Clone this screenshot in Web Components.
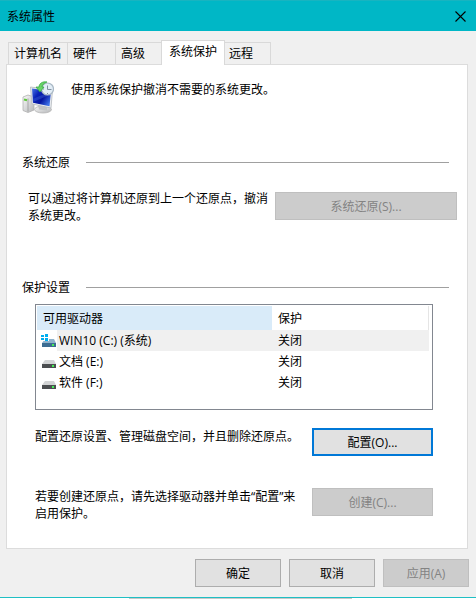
<!DOCTYPE html>
<html lang="zh-CN">
<head>
<meta charset="utf-8">
<meta name="viewport" content="width=device-width, initial-scale=1">
<title>系统属性</title>
<style>
html { height:100%; }
body {
    margin:0; min-height:100%; display:flex; flex-direction:column;
    font:12px/17px "Open Sans", "Noto Sans CJK SC", sans-serif;
    color:#000; background:#fff;
}
</style>
</head>
<body>

<sys-dialog heading="系统属性">
    <sys-tab slot="tabs">计算机名</sys-tab>
    <sys-tab slot="tabs">硬件</sys-tab>
    <sys-tab slot="tabs">高级</sys-tab>
    <sys-tab slot="tabs" selected>系统保护</sys-tab>
    <sys-tab slot="tabs">远程</sys-tab>

    <sys-intro>使用系统保护撤消不需要的系统更改。</sys-intro>

    <sys-group heading="系统还原" class="restore">
        <sys-action wide>
            可以通过将计算机还原到上一个还原点，撤消系统更改。
            <sys-button slot="button" disabled>系统还原(S)...</sys-button>
        </sys-action>
    </sys-group>

    <sys-group heading="保护设置">
        <drive-list></drive-list>
        <sys-action>
            配置还原设置、管理磁盘空间，并且删除还原点。
            <sys-button slot="button" default>配置(O)...</sys-button>
        </sys-action>
        <sys-action>
            若要创建还原点，请先选择驱动器并单击“配置”来启用保护。
            <sys-button slot="button" disabled>创建(C)...</sys-button>
        </sys-action>
    </sys-group>

    <sys-button slot="footer">确定</sys-button>
    <sys-button slot="footer">取消</sys-button>
    <sys-button slot="footer" disabled>应用(A)</sys-button>
</sys-dialog>

<script>
customElements.define('sys-dialog', class extends HTMLElement {
    constructor() {
        super();
        const shadow = this.attachShadow({mode: 'open'});
        shadow.innerHTML = `
        <style>
        :host { display:flex; flex-direction:column; flex:1; background:#f0f0f0; }
        header { display:flex; align-items:center; justify-content:space-between; height:30px; padding-left:7px; background:#00b7c6; border-top:1px solid #18b4c0; }
        h1 { margin:0; font-size:12px; font-weight:normal; }
        .close { width:32px; height:30px; padding:0; border:0; background:none; display:grid; place-items:center; }
        .tabs { display:flex; align-items:flex-end; height:24px; margin:9px 8px 0; }
        main { flex:1; margin:0 8px 0 6px; border:1px solid #dcdcdc; background:#fff; }
        footer { display:flex; justify-content:flex-end; gap:8px; padding:10px 7px; border-bottom:1px solid #1fbfc4; --button-width:86px; }
        .behind { height:1px; background:linear-gradient(90deg, #fff 27%, #c8c8c8 27% 74%, #fff 74%); }
        </style>
        <header>
            <h1></h1>
            <button class=close aria-label="关闭">
                <svg width=11 height=11 viewBox="0 0 11 11"><path d="M.5.5l10 10M10.5.5l-10 10" stroke="#000" stroke-width="1.1"/></svg>
            </button>
        </header>
        <div class=tabs role=tablist><slot name=tabs></slot></div>
        <main><slot></slot></main>
        <footer><slot name=footer></slot></footer>
        <div class=behind></div>`;
        this.titleEl = shadow.querySelector('h1');
    }
    connectedCallback() {
        this.titleEl.textContent = this.getAttribute('heading');
        this.addEventListener('click', e => {
            const tab = e.target.closest('sys-tab');
            if (!tab) return;
            for (const el of this.querySelectorAll('sys-tab')) el.toggleAttribute('selected', el === tab);
        });
    }
});

customElements.define('sys-tab', class extends HTMLElement {
    static observedAttributes = ['selected'];
    constructor() {
        super();
        const shadow = this.attachShadow({mode: 'open', delegatesFocus: true});
        shadow.innerHTML = `
        <style>
        :host { display:block; min-width:48px; }
        button { box-sizing:border-box; width:100%; height:22px; padding:0 5px; border:solid #d9d9d9; border-width:1px 0 0 1px; background:#f0f0f0; color:inherit; font:inherit; text-align:left; white-space:nowrap; }
        :host(:last-of-type) button { border-right-width:1px; }
        :host([selected]) { position:relative; z-index:1; margin:0 -2px -1px; }
        :host([selected]) button { height:25px; padding:0 7px 3px; border-right-width:1px; background:#fff; }
        </style>
        <button role=tab><slot></slot></button>`;
        this.button = shadow.querySelector('button');
    }
    attributeChangedCallback() {
        this.button.setAttribute('aria-selected', this.hasAttribute('selected'));
    }
});

customElements.define('sys-button', class extends HTMLElement {
    static observedAttributes = ['disabled'];
    constructor() {
        super();
        const shadow = this.attachShadow({mode: 'open', delegatesFocus: true});
        shadow.innerHTML = `
        <style>
        :host { display:block; width:var(--button-width, auto); }
        button { box-sizing:border-box; width:100%; height:28px; padding:0; border:1px solid #adadad; background:#e1e1e1; color:#000; font:inherit; }
        button:disabled { border-color:#bfbfbf; background:#ccc; color:#838383; }
        :host([default]) button { border:2px solid #0078d7; }
        </style>
        <button><slot></slot></button>`;
        this.button = shadow.querySelector('button');
    }
    attributeChangedCallback() {
        this.button.disabled = this.hasAttribute('disabled');
    }
});

customElements.define('sys-intro', class extends HTMLElement {
    constructor() {
        super();
        this.attachShadow({mode: 'open'}).innerHTML = `
        <style>
        :host { display:flex; gap:17px; padding:16px 15px 0; }
        svg { flex:none; }
        p { margin:0; }
        </style>
        <svg width=32 height=34 viewBox="0 0 32 34" aria-hidden=true>
            <defs>
                <linearGradient id=screen x2=1 y2=".7"><stop stop-color="#4a78e6"/><stop offset=".35" stop-color="#0a22b8"/><stop offset=".65" stop-color="#0515a0"/><stop offset="1" stop-color="#3d71e8"/></linearGradient>
                <linearGradient id=metal x2=1 y2=1><stop stop-color="#fafafa"/><stop offset="1" stop-color="#b4b6b8"/></linearGradient>
            </defs>
            <path d="M1 16l5-2 6 2v13l-6 2.500-5-2z" fill="url(#metal)" stroke="#b0b0b0" stroke-width=".8"/>
            <path d="M6 17.500v13" stroke="#999" stroke-width=".8"/>
            <path d="M2 18.500l3 .8" stroke="#5fc83c" stroke-width=2 />
            <ellipse cx=21 cy=28.500 rx=8.500 ry=3.500 fill="url(#metal)" stroke="#b5b5b5" stroke-width=".8"/>
            <path d="M16 24l9 1.500v4l-8-1z" fill="#c2c4c6"/>
            <path d="M8.500 6l22 3-1.500 18-19-4z" fill="#e9ecf0" stroke="#b4b9be" stroke-width=".8"/>
            <path d="M10 7.500l19 2.800-1.500 15-16.500-3.500z" fill="url(#screen)"/>
            <path d="M10.500 18l17-7v3L11 21z" fill="#618eec" opacity=".25"/>
            <circle cx=25.500 cy=8 r=6 fill="#e2edf6" stroke="#a9b8c5" stroke-width="1.200"/>
            <path d="M25.500 4.500v4h4M21 8h1M25.500 12v1" fill=none stroke="#8291a0"/>
            <path d="M25 1C20 0 17 3 17 6h-3l4 5 4-5h-2c0-2 2-4 5-5z" fill="#6ad468" stroke="#2fa43e" stroke-width=".7"/>
        </svg>
        <p><slot></slot></p>`;
    }
});

customElements.define('sys-group', class extends HTMLElement {
    constructor() {
        super();
        const shadow = this.attachShadow({mode: 'open'});
        shadow.innerHTML = `
        <style>
        :host { display:block; padding:38px 18px 0 15px; }
        :host(.restore) { margin:1px 0 9px; }
        .heading { display:flex; align-items:center; gap:16px; }
        h2 { margin:0; font-size:12px; font-weight:normal; }
        hr { flex:1; margin:0; border:0; border-top:1px solid #a0a0a0; }
        .body { display:flex; flex-direction:column; gap:18px; padding:8px 16px 0 13px; }
        :host(.restore) .body { padding:19px 0 0 6px; margin-right:-8px; }
        </style>
        <div class=heading><h2></h2><hr></div>
        <div class=body><slot></slot></div>`;
        this.titleEl = shadow.querySelector('h2');
    }
    connectedCallback() {
        this.titleEl.textContent = this.getAttribute('heading');
    }
});

// a description with its button on the right
customElements.define('sys-action', class extends HTMLElement {
    constructor() {
        super();
        this.attachShadow({mode: 'open'}).innerHTML = `
        <style>
        :host { display:grid; grid-template-columns:1fr 121px; gap:11px; min-height:42px; --button-width:100%; }
        :host([wide]) { grid-template-columns:1fr 182px; gap:4px; }
        p { margin:0; }
        :host([wide]) ::slotted(sys-button) { margin-top:2px; }
        </style>
        <p><slot></slot></p>
        <slot name=button></slot>`;
    }
});

customElements.define('drive-icon', class extends HTMLElement {
    constructor() {
        super();
        this.attachShadow({mode: 'open'}).innerHTML = `
        <style>
        :host { display:block; height:16px; --top:#d2d4d5; --body:#4b4e50; }
        :host([system]) { --top:#8fb2cc; --body:#3c6c92; }
        .win { display:none; }
        :host([system]) .win { display:inline; }
        svg { display:block; }
        </style>
        <svg width=16 height=16 viewBox="0 0 16 16" aria-hidden=true>
            <path d="M4 6h9l2 4H1z" style="fill:var(--top)"/>
            <path d="M1 10h14v4H1z" style="fill:var(--body)"/>
            <path d="M11 11h2v2h-2z" fill="#45ed57"/>
            <path class=win d="M-1 1h9v7h-9z" fill="#fff"/>
            <path class=win d="M0 2h3v2H0zM4 1h3v3H4zM0 5h3v2H0zM4 5h3v3H4z" fill="#00adef"/>
        </svg>`;
    }
});

customElements.define('drive-list', class extends HTMLElement {
    constructor() {
        super();
        const drives = [
            {name: 'WIN10 (C:) (系统)', state: '关闭', system: true},
            {name: '文档 (E:)', state: '关闭'},
            {name: '软件 (F:)', state: '关闭'},
        ];
        this.attachShadow({mode: 'open'}).innerHTML = `
        <style>
        :host { display:block; box-sizing:border-box; min-height:106px; padding:1px 3px 1px 1px; border:1px solid #828790; background:#fff; }
        table { width:100%; border-collapse:collapse; table-layout:fixed; }
        th, td { padding:0 6px; font-weight:normal; text-align:left; }
        th { height:24px; }
        th:first-child { width:60%; box-sizing:border-box; background:#d9ebf9; }
        th:last-child { border-right:1px solid #e5e5e5; }
        td { height:21px; }
        td:first-child { padding:0; }
        .name { display:flex; align-items:center; padding-left:4px; }
        .name span { flex:1; padding-left:2px; line-height:21px; }
        .selected td:last-child, .selected span { background:#f0f0f0; }
        </style>
        <table>
            <thead><tr><th>可用驱动器</th><th>保护</th></tr></thead>
            <tbody>${drives.map(d => `
                <tr class="${d.system ? 'selected' : ''}">
                    <td><div class=name><drive-icon ${d.system ? 'system' : ''}></drive-icon><span>${d.name}</span></div></td>
                    <td>${d.state}</td>
                </tr>`).join('')}
            </tbody>
        </table>`;
    }
});
</script>
</body>
</html>
